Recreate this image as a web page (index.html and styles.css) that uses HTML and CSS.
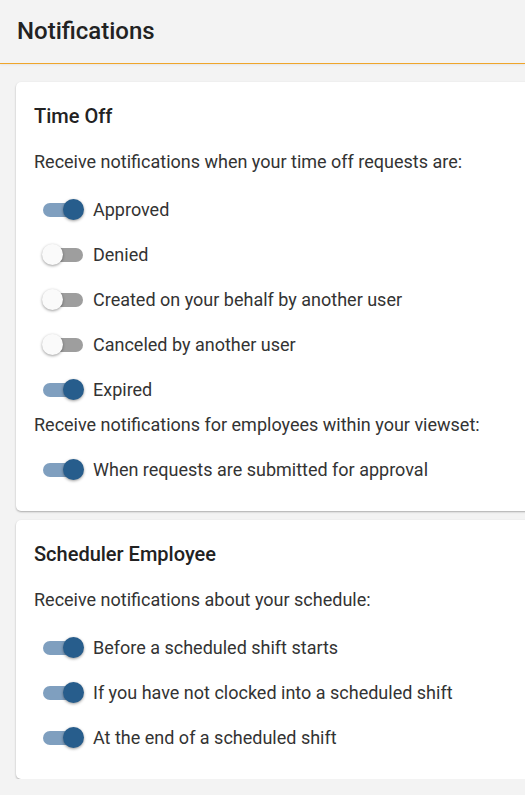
FILE: index.html
```html
<!DOCTYPE html>
<html lang="en">
<head>
    <meta charset="UTF-8">
    <meta name="viewport" content="width=device-width, initial-scale=1.0">
    <title>Notifications</title>
    <link rel="stylesheet" href="styles.css">
</head>
<body>

    <header class="page-header">
        <h1>Notifications</h1>
    </header>

    <div class="content">
        <!-- Time Off -->
        <section class="card">
            <h2>Time Off</h2>
            <p class="hint">Receive notifications when your time off requests are:</p>
            <label class="row"><span class="switch on"></span>Approved</label>
            <label class="row"><span class="switch"></span>Denied</label>
            <label class="row"><span class="switch"></span>Created on your behalf by another user</label>
            <label class="row"><span class="switch"></span>Canceled by another user</label>
            <label class="row"><span class="switch on"></span>Expired</label>
            <p class="hint tight">Receive notifications for employees within your viewset:</p>
            <label class="row"><span class="switch on"></span>When requests are submitted for approval</label>
        </section>

        <!-- Scheduler Employee -->
        <section class="card">
            <h2>Scheduler Employee</h2>
            <p class="hint">Receive notifications about your schedule:</p>
            <label class="row"><span class="switch on"></span>Before a scheduled shift starts</label>
            <label class="row"><span class="switch on"></span>If you have not clocked into a scheduled shift</label>
            <label class="row"><span class="switch on"></span>At the end of a scheduled shift</label>
        </section>
    </div>

    <script>
        // toggle switches
        document.querySelectorAll(".row").forEach(function(row) {
            row.addEventListener("click", function() {
                row.querySelector(".switch").classList.toggle("on");
            });
        });
    </script>

</body>
</html>
```

FILE: styles.css
```css
body {
    margin: 0;
    font-family: Roboto, "Liberation Sans", Arial, sans-serif;
    background-color: #f3f3f3;
    color: #333;
    overflow-x: hidden;
}
.page-header {
    height: 63px;
    border-bottom: 1px solid #efa52a;
    display: flex;
    align-items: center;
    padding-left: 17px;
    box-shadow: 0 1px 2px rgba(0, 0, 0, 0.06);
}
.page-header h1 {
    margin: 0;
    font-size: 24px;
    font-weight: 500;
    color: #222;
    padding-bottom: 2px;
}
.content {
    padding: 18px 0 0 16px;
    display: flex;
    flex-direction: column;
    gap: 9px;
}
.card {
    background-color: #fff;
    border-radius: 5px;
    margin-right: -12px;
    padding: 22px 18px 19px 18px;
    box-shadow: 0 1px 2px rgba(0, 0, 0, 0.3);
}
.card h2 {
    margin: 0;
    font-size: 20px;
    font-weight: 500;
    line-height: 24px;
    color: #222;
}
.hint {
    margin: 22px 0 13px;
    font-size: 18px;
    line-height: 24px;
}
.hint.tight {
    margin: 1px 0 10px;
}
.row {
    display: flex;
    align-items: center;
    height: 45px;
    font-size: 18px;
    cursor: pointer;
}
.switch {
    position: relative;
    width: 40px;
    height: 14px;
    margin: 0 10px 0 9px;
    border-radius: 7px;
    background-color: #9e9e9e;
}
.switch::after {
    content: "";
    position: absolute;
    top: -4px;
    left: -1px;
    width: 21px;
    height: 21px;
    border-radius: 50%;
    background-color: #fafafa;
    box-shadow: 0 1px 3px rgba(0, 0, 0, 0.4);
}
.switch.on {
    background-color: #7f9fbf;
}
.switch.on::after {
    left: auto;
    right: -1px;
    background-color: #275d8c;
}
```
